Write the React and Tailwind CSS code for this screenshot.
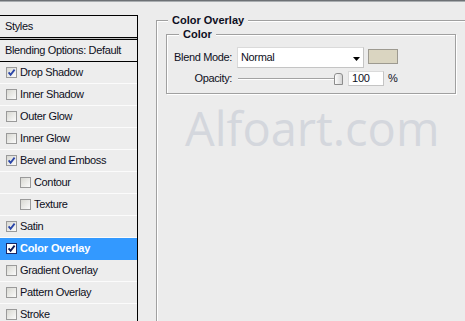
import React from "react";

const rows = [
  { label: "Drop Shadow", checked: true },
  { label: "Inner Shadow", checked: false },
  { label: "Outer Glow", checked: false },
  { label: "Inner Glow", checked: false },
  { label: "Bevel and Emboss", checked: true },
  { label: "Contour", checked: false, indent: true },
  { label: "Texture", checked: false, indent: true },
  { label: "Satin", checked: true },
  { label: "Color Overlay", checked: true, active: true },
  { label: "Gradient Overlay", checked: false },
  { label: "Pattern Overlay", checked: false },
  { label: "Stroke", checked: false },
];

function CheckBox({ checked, active }) {
  return (
    <span
      className={
        "flex w-[11px] h-[11px] shrink-0 items-center justify-center border " +
        (active
          ? "border-[#1b2766] bg-white"
          : "border-[#9a9a9a] bg-linear-to-br from-[#d8d8d2] to-[#fbfbfb]")
      }
    >
      {checked && (
        <svg viewBox="0 0 9 9" className="w-[9px] h-[9px]">
          <path
            d="M1.6 4.4 L3.6 6.9 L7.6 1.6"
            fill="none"
            stroke={active ? "#0c1654" : "#2a45a8"}
            strokeWidth="1.8"
          />
        </svg>
      )}
    </span>
  );
}

function Row({ label, checked, indent, active }) {
  return (
    <div
      className={
        "flex h-[22px] items-center border-b " +
        (active ? "border-[#3399ff] bg-[#3399ff]" : "border-[#fbfbfb]") +
        (indent ? " pl-[20px]" : " pl-[6px]")
      }
    >
      <CheckBox checked={checked} active={active} />
      <span
        className={
          "ml-[3px] whitespace-nowrap " +
          (active
            ? "font-bold text-white tracking-[-0.15px]"
            : "tracking-[-0.35px]")
        }
      >
        {label}
      </span>
    </div>
  );
}

export default function App() {
  return (
    <div className="w-[465px] h-[321px] overflow-hidden bg-[#ececec] font-['Liberation_Sans',Arial,sans-serif] text-[11px] text-[#0e0f22]">
      <div className="h-px bg-[#6d7175]" />
      <div className="h-px bg-[#a9adb0]" />
      <div className="flex h-[319px]">
        {/* Left styles list */}
        <div className="mt-[13px] w-[138px] h-[306px] shrink-0 border-t border-r border-black bg-[#ededed]">
          <div className="flex h-[21px] items-center pl-[5px] tracking-[-0.35px]">
            Styles
          </div>
          <div className="h-px bg-black" />
          <div className="h-px bg-[#bcbcbc]" />
          <div className="h-px bg-black" />
          <div className="flex h-[21px] items-center pl-[5px] tracking-[-0.35px] whitespace-nowrap">
            Blending Options: Default
          </div>
          <div className="h-px bg-black" />
          {rows.map((r) => (
            <Row key={r.label} {...r} />
          ))}
        </div>

        {/* Right settings */}
        <div className="pl-[18px] pt-[18px]">
          <div className="relative w-[330px] h-[320px] border border-[#a0a0a0] shadow-[inset_1px_1px_0_#ffffff] pt-[13px] pl-[9px]">
            <div className="absolute left-[11px] top-[-8px] px-1 bg-[#ececec] font-bold leading-[14px] whitespace-nowrap">
              Color Overlay
            </div>

            <div className="relative w-[290px] h-[60px] border border-[#a0a0a0] shadow-[inset_1px_1px_0_#ffffff,1px_1px_0_#ffffff] pt-[12px]">
              <div className="absolute left-[12px] top-[-8px] px-1 bg-[#ececec] font-bold leading-[14px]">
                Color
              </div>

              <div className="flex items-start h-[21px]">
                <div className="w-[65px] text-right leading-[21px] tracking-[-0.35px] whitespace-nowrap">
                  Blend Mode:
                </div>
                <div className="relative ml-[5px] w-[127px] h-[21px] bg-white border border-[#dadada] border-r-[#c4c4c4] border-b-[#c4c4c4]">
                  <span className="pl-[3px] leading-[19px] tracking-[-0.35px]">
                    Normal
                  </span>
                  <svg
                    viewBox="0 0 7 4"
                    className="absolute right-[3px] top-[9px] w-[7px] h-[4px]"
                  >
                    <polygon points="0,0 7,0 3.5,4" fill="#000" />
                  </svg>
                </div>
                <div className="ml-[4px] mt-[2px] w-[30px] h-[15px] border border-[#9d9a90] bg-[#dad5c1]" />
              </div>

              <div className="mt-[3px] flex h-[15px] items-center">
                <div className="w-[65px] text-right tracking-[-0.35px]">
                  Opacity:
                </div>
                <div className="ml-[5px] flex w-[106px] items-center">
                  <div className="ml-px w-[96px] h-[2px] border-t border-[#a3a3a3] border-b border-b-white" />
                  <svg viewBox="0 0 9 12" className="w-[9px] h-[12px]">
                    <defs>
                      <linearGradient id="thumb" x1="0" y1="0" x2="1" y2="0">
                        <stop offset="0" stopColor="#ffffff" />
                        <stop offset="1" stopColor="#d2d2d2" />
                      </linearGradient>
                    </defs>
                    <path
                      d="M0.5 11.5 V3 Q0.5 0.5 3 0.5 H6 Q8.5 0.5 8.5 3 V11.5 Z"
                      fill="url(#thumb)"
                      stroke="#8c8c8c"
                    />
                  </svg>
                </div>
                <div className="ml-[5px] w-[36px] h-[15px] bg-white border border-[#dadada] border-r-[#c4c4c4] border-b-[#c4c4c4] pl-[3px] leading-[13px] tracking-[-0.2px]">
                  100
                </div>
                <div className="ml-[4px]">%</div>
              </div>
            </div>

            <div className="mt-[11px] ml-[19px] font-['Open_Sans',sans-serif] text-[47px] leading-none text-[#d4d7dd] whitespace-nowrap">
              Alfoart.com
            </div>
          </div>
        </div>
      </div>
    </div>
  );
}
